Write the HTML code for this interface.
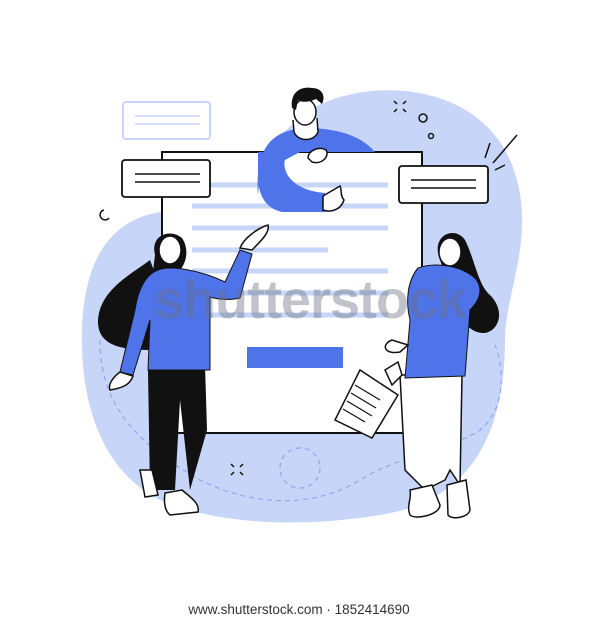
<!DOCTYPE html>
<html><head><meta charset="utf-8"><style>
html,body{margin:0;padding:0;background:#fff;width:600px;height:620px;overflow:hidden}
svg{display:block}
</style></head><body>
<svg width="600" height="620" viewBox="0 0 600 620" xmlns="http://www.w3.org/2000/svg">
<path d="M300 118 C340 80 470 70 510 160 C540 230 505 290 505 340 C505 420 480 500 380 515 C300 528 220 525 160 500 C100 470 80 400 82 330 C84 260 110 220 160 212 C220 205 260 150 300 118 Z" fill="#c7d6f8"/>
<path d="M100 340 C100 400 130 440 200 480 C260 510 320 505 360 480 C400 455 450 450 480 430 C505 410 505 370 495 345" fill="none" stroke="#8fa8ee" stroke-width="1.2" stroke-dasharray="5 4"/>
<circle cx="300" cy="468" r="20" fill="none" stroke="#8fa8ee" stroke-width="1.2" stroke-dasharray="5 4"/>
<rect x="123" y="102" width="87" height="37" rx="3" fill="#fff" stroke="#c7d6f8" stroke-width="2"/>
<line x1="135" y1="116" x2="200" y2="116" stroke="#c7d6f8" stroke-width="1.5"/>
<line x1="135" y1="124" x2="200" y2="124" stroke="#c7d6f8" stroke-width="1.5"/>
<rect x="162" y="152" width="260" height="281" fill="#fff" stroke="#111" stroke-width="2"/>
<g stroke="#c7d6f8" stroke-width="5">
<line x1="192" y1="185" x2="388" y2="185"/>
<line x1="192" y1="206" x2="388" y2="206"/>
<line x1="192" y1="228" x2="388" y2="228"/>
<line x1="192" y1="250" x2="328" y2="250"/>
<line x1="192" y1="271" x2="388" y2="271"/>
<line x1="192" y1="293" x2="388" y2="293"/>
<line x1="192" y1="315" x2="388" y2="315"/>
</g>
<rect x="247" y="347" width="96" height="21" fill="#4f74ea"/>
<rect x="122" y="160" width="88" height="37" rx="3" fill="#fff" stroke="#111" stroke-width="1.8"/>
<line x1="135" y1="174" x2="200" y2="174" stroke="#111" stroke-width="1.5"/>
<line x1="135" y1="182" x2="200" y2="182" stroke="#111" stroke-width="1.5"/>
<rect x="399" y="166" width="89" height="37" rx="3" fill="#fff" stroke="#111" stroke-width="1.8"/>
<line x1="411" y1="180" x2="476" y2="180" stroke="#111" stroke-width="1.5"/>
<line x1="411" y1="188" x2="476" y2="188" stroke="#111" stroke-width="1.5"/>
<g stroke="#111" stroke-width="1.5" fill="none">
<circle cx="423" cy="118" r="4"/><circle cx="431" cy="136" r="2.5"/>
<path d="M394 101l3 3M406 101l-3 3M394 112l3-3M406 112l-3-3"/>
<path d="M231 464l3 3M243 464l-3 3M231 475l3-3M243 475l-3-3"/>
<path d="M485 158l5-15M493 163l24-28M495 170l10-5"/>
<path d="M104 210a5 5 0 1 0 5 8"/>
</g>
<path d="M258 195 C255 150 270 130 305 128 C345 128 365 140 375 152 L322 152 L262 152 Z" fill="#4f74ea"/>
<path d="M258 152 L300 152 L285 160 C282 170 290 190 325 193 L325 212 L282 212 C265 208 258 195 258 175 Z" fill="#4f74ea"/>
<path d="M293 120 L294 132 C298 142 314 142 318 132 L317 118" fill="#fff" stroke="#111" stroke-width="1.5"/>
<ellipse cx="305" cy="112" rx="11" ry="13" fill="#fff" stroke="#111" stroke-width="1.5"/>
<path d="M292 108 C290 93 300 86 312 88 C322 88 326 96 322 104 L316 99 C310 102 302 103 298 100 L296 110 Z" fill="#111"/>
<path d="M308 158 C308 150 320 146 326 150 C330 156 322 165 312 162 Z" fill="#fff" stroke="#111" stroke-width="1.5"/>
<path d="M323 196 L340 186 C342 190 340 196 344 200 C340 212 328 212 323 210 Z" fill="#fff" stroke="#111" stroke-width="1.5"/>
<path d="M150 260 C130 275 100 290 98 320 C97 345 120 350 150 350 L165 300 Z" fill="#111"/>
<path d="M155 255 C150 235 170 228 182 238 C190 250 186 265 178 272 L152 280 Z" fill="#111"/>
<ellipse cx="170" cy="250" rx="11" ry="14" fill="#fff" stroke="#111" stroke-width="1.5"/>
<path d="M148 370 L150 490 L175 490 L180 400 L190 490 L207 430 L205 365 Z" fill="#111"/>
<path d="M140 470 L152 470 L158 495 L145 497 Z" fill="#fff" stroke="#111" stroke-width="1.5"/>
<path d="M165 493 L182 490 C190 497 200 503 198 512 L170 515 C164 510 164 500 165 493 Z" fill="#fff" stroke="#111" stroke-width="1.5"/>
<path d="M158 270 C170 265 200 270 225 282 L240 250 L252 254 L240 298 C232 300 220 300 210 297 L210 370 L148 370 L150 320 L133 375 L120 372 L135 310 C138 290 145 275 158 270 Z" fill="#4f74ea" stroke="#111" stroke-width="1"/>
<path d="M240 248 C244 238 258 228 268 225 C270 232 262 240 252 250 Z" fill="#fff" stroke="#111" stroke-width="1.5"/>
<path d="M120 372 L133 376 C130 385 122 388 110 390 C108 385 112 378 120 372 Z" fill="#fff" stroke="#111" stroke-width="1.5"/>
<path d="M440 260 C430 235 455 225 465 240 C475 260 478 285 490 295 C505 310 500 330 485 333 C470 334 460 320 455 300 Z" fill="#111"/>
<ellipse cx="450" cy="252" rx="11" ry="14" fill="#fff" stroke="#111" stroke-width="1.5"/>
<path d="M400 375 L405 470 L425 490 L445 480 L450 470 L460 485 L462 375 Z" fill="#fff" stroke="#111" stroke-width="1.5"/>
<path d="M418 268 C435 262 460 265 475 278 C485 290 478 302 470 310 L465 376 L405 378 L410 320 C405 300 408 280 418 268 Z" fill="#4f74ea" stroke="#111" stroke-width="1"/>
<path d="M410 490 L432 485 L440 505 C440 515 415 520 410 515 C406 505 412 500 410 490 Z" fill="#fff" stroke="#111" stroke-width="1.5"/>
<path d="M447 485 L466 480 L470 510 C468 518 452 520 448 515 Z" fill="#fff" stroke="#111" stroke-width="1.5"/>
<path d="M335 420 L360 370 L398 395 L372 438 Z" fill="#fff" stroke="#111" stroke-width="1.5"/>
<g stroke="#111" stroke-width="1.2"><line x1="355" y1="385" x2="380" y2="400"/><line x1="351" y1="393" x2="376" y2="408"/><line x1="347" y1="401" x2="372" y2="416"/><line x1="343" y1="409" x2="365" y2="422"/></g>
<path d="M392 340 C380 345 385 355 400 352 L408 345 Z" fill="#fff" stroke="#111" stroke-width="1.5"/>
<path d="M385 370 L398 362 L402 375 L392 385 Z" fill="#fff" stroke="#111" stroke-width="1.5"/>
<text x="310" y="318" text-anchor="middle" font-family="Liberation Sans, sans-serif" font-weight="bold" font-size="54" fill="#6b6f80" fill-opacity="0.42" letter-spacing="-1">shutterstock</text>
<text x="299" y="614" text-anchor="middle" font-family="Liberation Sans, sans-serif" font-size="13.5" fill="#333">www.shutterstock.com · 1852414690</text>
</svg>
</body></html>
